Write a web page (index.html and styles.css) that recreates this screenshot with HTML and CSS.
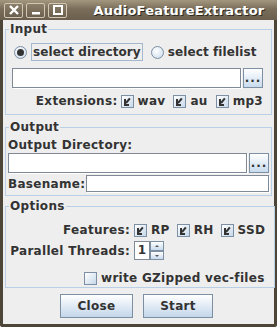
FILE: index.html
```html
<!DOCTYPE html>
<html>
<head>
  <meta charset="UTF-8">
  <title>AudioFeatureExtractor</title>
  <link rel="stylesheet" href="styles.css">
</head>
<body>
  <div class="window">
    <div class="titlebar">
      <div class="tbtns">
        <span class="tbtn"><svg width="12" height="10" viewBox="0 0 12 10"><path d="M2 1 L10 9 M10 1 L2 9" stroke="#fff" stroke-width="2.4"/></svg></span>
        <span class="tbtn"><svg width="12" height="10" viewBox="0 0 12 10"><rect x="2" y="7" width="8" height="2.5" fill="#fff"/></svg></span>
        <span class="tbtn"><svg width="12" height="10" viewBox="0 0 12 10"><rect x="2" y="1" width="8" height="8" fill="none" stroke="#fff" stroke-width="2"/></svg></span>
      </div>
      <div class="title">AudioFeatureExtractor</div>
    </div>

    <div class="content">
      <fieldset class="group input">
        <legend>Input</legend>
        <div class="radios">
          <span class="radio on"></span><span class="focus">select directory</span>
          <span class="radio"></span><span>select filelist</span>
        </div>
        <div class="pathrow">
          <span class="field"></span>
          <span class="dots">...</span>
        </div>
        <div class="exts">
          <span>Extensions:</span>
          <span class="cb on"></span><span>wav</span>
          <span class="cb on"></span><span>au</span>
          <span class="cb on"></span><span>mp3</span>
        </div>
      </fieldset>

      <fieldset class="group output">
        <legend>Output</legend>
        <div class="lbl">Output Directory:</div>
        <div class="pathrow">
          <span class="field"></span>
          <span class="dots">...</span>
        </div>
        <div class="baserow">
          <span>Basename:</span>
          <span class="field"></span>
        </div>
      </fieldset>

      <fieldset class="group options">
        <legend>Options</legend>
        <div class="optrow feats">
          <span class="olbl">Features:</span>
          <span class="cb on"></span><span>RP</span>
          <span class="cb on"></span><span>RH</span>
          <span class="cb on"></span><span>SSD</span>
        </div>
        <div class="optrow threads">
          <span class="olbl">Parallel Threads:</span>
          <span class="spin">
            <span class="spinval">1</span>
            <span class="arrows"><span class="up"></span><span class="down"></span></span>
          </span>
        </div>
        <div class="gzrow">
          <span class="cb"></span><span>write GZipped vec-files</span>
        </div>
      </fieldset>

      <div class="buttons">
        <span class="btn close">Close</span>
        <span class="btn start">Start</span>
      </div>
    </div>
  </div>
</body>
</html>
```

FILE: styles.css
```css
* {padding: 0; margin: 0; box-sizing: border-box;}

html, body {
  width: 277px;
  height: 327px;
  background: #eeeeee;
  overflow: hidden;
}
body {
  font-family: "DejaVu Sans", sans-serif;
  font-weight: bold;
  font-size: 12px;
  letter-spacing: 0.3px;
  color: #333;
}
.window {
  width: 277px;
  height: 327px;
  border: 3px solid #4d4537;
  border-top: none;
  border-radius: 0 0 3px 3px;
  display: flex;
  flex-direction: column;
}
.titlebar {
  height: 20px;
  margin: 0 -3px;
  background: linear-gradient(#a3977f, #7a6e5a 45%, #6a5f4d);
  display: flex;
  align-items: center;
  padding-left: 4px;
}
.tbtns {
  display: flex;
  gap: 3px;
}
.tbtn {
  width: 19px;
  height: 15px;
  border: 1px solid #d2c7b2;
  border-radius: 2px;
  background: linear-gradient(#8b7f6a, #6b604e);
  display: flex;
  align-items: center;
  justify-content: center;
}
.title {
  flex: 1;
  text-align: center;
  color: #fff;
  font-size: 13px;
  letter-spacing: 0.2px;
  padding-left: 14px;
  text-shadow: 1px 1px 0 #2e281f;
}
.content {
  flex: 1;
  display: flex;
  flex-direction: column;
  padding: 0 2px;
}

.group {
  border: 1px solid #b8cfe5;
  padding: 0 2px;
}
.group legend {
  margin-left: 1px;
  padding: 0 1px;
  line-height: 14px;
}
.input legend {
  margin-left: -3px;
}
.input {
  margin-top: 2px;
  padding: 7px 8px 4px 6px;
}
.output {
  margin-top: 5px;
  padding: 4px 2px 3px 2px;
}
.options {
  margin-top: 3px;
  padding: 8px 2px 2px 2px;
}

.radios {
  height: 18px;
  display: flex;
  align-items: center;
  margin-left: 2px;
  letter-spacing: 0.1px;
}
.radio {
  width: 13px;
  height: 13px;
  border-radius: 50%;
  border: 1px solid #7d8fa3;
  background: radial-gradient(circle at 40% 35%, #ffffff, #c6d8ea);
  margin-right: 4px;
  position: relative;
}
.radio.on::after {
  content: "";
  position: absolute;
  left: 2px;
  top: 2px;
  width: 7px;
  height: 7px;
  border-radius: 50%;
  background: #333;
}
.focus {
  border: 1px solid #a3b8cc;
  padding: 1px 1px 1px 1px;
  margin-right: 8px;
  line-height: 14px;
}

.pathrow {
  height: 20px;
  display: flex;
  gap: 2px;
}
.input .pathrow {
  margin-top: 7px;
}
.output .pathrow {
  margin-top: 1px;
}
.field {
  flex: 1;
  background: #fff;
  border: 1px solid #7f8a96;
  box-shadow: inset 0 0 0 1px #fff, 1px 1px 0 #fff;
}
.dots {
  width: 20px;
  border: 1px solid #7d8fa3;
  background: linear-gradient(#ffffff, #c8dbee);
  text-align: center;
  line-height: 19px;
  letter-spacing: 1px;
}

.exts {
  height: 18px;
  margin-top: 4px;
  display: flex;
  justify-content: flex-end;
  align-items: center;
}
.exts .cb {
  margin-left: 8px;
}
.exts span:first-child + .cb {
  margin-left: 3px;
}
.cb {
  width: 13px;
  height: 13px;
  border: 1px solid #7d8fa3;
  background: linear-gradient(135deg, #ffffff, #c6d8ea);
  margin-right: 4px;
  position: relative;
}
.cb.on::after {
  content: "";
  position: absolute;
  left: 2px;
  top: 3px;
  width: 3px;
  height: 5px;
  border-left: 2px solid #333;
  border-bottom: 2px solid #333;
}
.cb.on::before {
  content: "";
  position: absolute;
  left: 4px;
  top: 6px;
  width: 6px;
  height: 2px;
  background: #333;
  transform: rotate(-50deg);
  transform-origin: left center;
}

.lbl {
  height: 14px;
  line-height: 14px;
}
.baserow {
  height: 17px;
  margin-top: 2px;
  display: flex;
  align-items: center;
}
.baserow .field {
  height: 17px;
  margin-left: 1px;
}

.optrow {
  display: flex;
  align-items: center;
}
.olbl {
  width: 122px;
  text-align: right;
  margin-right: 4px;
  white-space: nowrap;
}
.feats {
  height: 18px;
}
.feats .cb + span {
  margin-right: 7px;
}
.threads {
  height: 19px;
  margin-top: 2px;
}
.spin {
  display: flex;
  height: 19px;
}
.spinval {
  width: 16px;
  background: #fff;
  border: 1px solid #7f8a96;
  text-align: center;
  line-height: 17px;
}
.arrows {
  width: 14px;
  display: flex;
  flex-direction: column;
}
.arrows span {
  flex: 1;
  border: 1px solid #7d8fa3;
  background: linear-gradient(#ffffff, #c8dbee);
  position: relative;
}
.arrows .up::after,
.arrows .down::after {
  content: "";
  position: absolute;
  left: 4px;
  top: 3px;
  border-left: 2px solid transparent;
  border-right: 2px solid transparent;
}
.arrows .up::after {
  border-bottom: 2px solid #555;
}
.arrows .down::after {
  border-top: 2px solid #555;
}
.gzrow {
  height: 14px;
  margin-top: 11px;
  margin-left: 76px;
  display: flex;
  align-items: center;
}

.buttons {
  display: flex;
  justify-content: center;
  gap: 10px;
  margin-top: 6px;
  padding-right: 4px;
}
.btn {
  height: 24px;
  border: 1px solid #7d8fa3;
  background: linear-gradient(#ffffff, #c3d6ea);
  line-height: 22px;
  text-align: center;
}
.close {
  width: 73px;
}
.start {
  width: 70px;
}
```
